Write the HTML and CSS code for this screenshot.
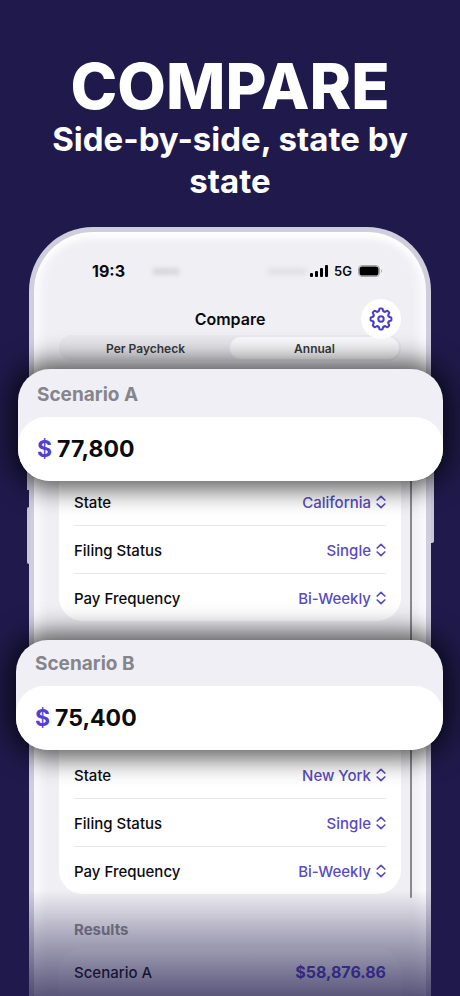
FILE: index.html
```
<!DOCTYPE html>
<html lang="en">
<head>
<meta charset="utf-8">
<meta name="viewport" content="width=device-width, initial-scale=1">
<title>Compare</title>
<link rel="stylesheet" href="styles.css">
</head>
<body>
<svg class="sprite" aria-hidden="true">
  <symbol id="updown" viewBox="0 0 10 14"><path d="M1.2 5 5 1.4l3.8 3.6M1.2 9 5 12.6l3.8-3.6"/></symbol>
</svg>
<header class="hero">
  <h1>COMPARE</h1>
  <p>Side-by-side, state by state</p>
</header>
<main class="phone">
  <span class="key key-upper"></span>
  <span class="key key-lower"></span>
  <span class="key key-power"></span>
  <span class="scrollbar"></span>

  <div class="status">
    <span class="time">19:3</span>
    <span class="ghost"></span>
    <span class="ghost ghost-wide"></span>
    <div class="signals">
      <svg class="bars" viewBox="0 0 18 12" aria-hidden="true"><rect x="0" y="8" width="3" height="4" rx="1"/><rect x="5" y="6" width="3" height="6" rx="1"/><rect x="10" y="3" width="3" height="9" rx="1"/><rect x="15" y="0" width="3" height="12" rx="1"/></svg>
      <span>5G</span>
      <svg class="battery" viewBox="0 0 25 12" aria-hidden="true"><rect class="shell" x=".5" y=".5" width="21" height="11" rx="3.5"/><rect x="1.5" y="1.5" width="19" height="9" rx="2.8"/><path class="tip" d="M23 4q2 2 0 4z"/></svg>
    </div>
  </div>

  <div class="titlebar">
    <h2>Compare</h2>
    <button class="gear" type="button" aria-label="Settings">
      <svg viewBox="-12 -12 24 24" aria-hidden="true">
        <defs><path id="tooth" d="M-3.1-7.5Q-2-7.6-1.9-8.6L-1.8-9.6Q-1.7-10.4-.9-10.4H.9Q1.7-10.4 1.8-9.6L1.9-8.6Q2-7.6 3.1-7.5"/></defs>
        <use href="#tooth"/><use href="#tooth" transform="rotate(45)"/><use href="#tooth" transform="rotate(90)"/><use href="#tooth" transform="rotate(135)"/><use href="#tooth" transform="rotate(180)"/><use href="#tooth" transform="rotate(225)"/><use href="#tooth" transform="rotate(270)"/><use href="#tooth" transform="rotate(315)"/>
        <circle r="2.7"/>
      </svg>
    </button>
  </div>

  <div class="segments">
    <button type="button">Per Paycheck</button>
    <button type="button" class="active">Annual</button>
  </div>

  <section class="card">
    <label for="amount-a">Scenario A</label>
    <div class="amount"><span>$</span><input id="amount-a" type="text" value="77,800"></div>
  </section>
  <div class="list">
    <div class="row"><label for="state-a">State</label><select id="state-a"><option>California</option></select><svg><use href="#updown"/></svg></div>
    <div class="row"><label for="filing-a">Filing Status</label><select id="filing-a"><option>Single</option></select><svg><use href="#updown"/></svg></div>
    <div class="row"><label for="pay-a">Pay Frequency</label><select id="pay-a"><option>Bi-Weekly</option></select><svg><use href="#updown"/></svg></div>
  </div>

  <section class="card card-b">
    <label for="amount-b">Scenario B</label>
    <div class="amount"><span>$</span><input id="amount-b" type="text" value="75,400"></div>
  </section>
  <div class="list list-b">
    <div class="row"><label for="state-b">State</label><select id="state-b"><option>New York</option></select><svg><use href="#updown"/></svg></div>
    <div class="row"><label for="filing-b">Filing Status</label><select id="filing-b"><option>Single</option></select><svg><use href="#updown"/></svg></div>
    <div class="row"><label for="pay-b">Pay Frequency</label><select id="pay-b"><option>Bi-Weekly</option></select><svg><use href="#updown"/></svg></div>
  </div>

  <section class="results">
    <h3>Results</h3>
    <div class="result"><span>Scenario A</span><strong>$58,876.86</strong></div>
  </section>
</main>
</body>
</html>
```
FILE: styles.css
```
* { box-sizing: border-box; }

body {
  margin: 0;
  min-height: 100vh;
  overflow-x: hidden;
  background: #1f1a4b;
  color: #0b0b0d;
  font-family: Inter, "Liberation Sans", sans-serif;
}

h1, h2, h3, p { margin: 0; }

button, input, select {
  margin: 0;
  padding: 0;
  border: 0;
  background: none;
  color: inherit;
  font: inherit;
}

.sprite { position: absolute; width: 0; height: 0; }

.hero {
  padding: 54px 40px 0;
  color: #fff;
  text-align: center;
}

.hero h1 {
  font-size: 63px;
  font-weight: 800;
  line-height: 64px;
}

.hero p {
  font-size: 33px;
  font-weight: 700;
  line-height: 42px;
}

.phone {
  position: relative;
  margin: 25px 29px 0;
  padding: 19px 25px 0;
  border: 5px solid #d0cedd;
  border-bottom: 0;
  border-radius: 64px 64px 0 0;
  background: #f0eff4;
  box-shadow:
    inset 0 12px 8px -6px #fff,
    inset 13px 0 8px -6px #fafafd,
    inset -13px 0 8px -6px #fafafd;
}

.key {
  position: absolute;
  width: 3px;
  background: #c9c7d6;
}

.key-upper { top: 195px; left: -7px; height: 63px; }
.key-lower { top: 275px; left: -7px; height: 57px; border-radius: 2px 0 0 2px; }
.key-power { top: 215px; right: -8px; height: 96px; border-radius: 0 2px 2px 0; }

.scrollbar {
  position: absolute;
  top: 195px;
  right: 14px;
  bottom: 98px;
  width: 2px;
  border-radius: 1px;
  background: #8a898d;
}

.status {
  display: flex;
  align-items: center;
  height: 40px;
  padding: 0 18px 0 33px;
  font-size: 16px;
  font-weight: 700;
}

.ghost {
  width: 26px;
  height: 7px;
  margin-left: 28px;
  background: #d8d7dc;
  filter: blur(2px);
}

.ghost-wide { width: 38px; margin-left: auto; background: #e2e1e7; }

.signals {
  display: flex;
  align-items: center;
  gap: 6px;
  margin-left: 4px;
  font-size: 13px;
  font-weight: 600;
}

.bars { width: 18px; height: 12px; }
.battery { width: 25px; height: 12px; }
.battery .shell { fill: none; stroke: #a5a4a9; }
.battery .tip { fill: #a5a4a9; }

.titlebar {
  display: grid;
  grid-template-columns: 40px 1fr 40px;
  align-items: center;
  height: 56px;
}

.titlebar h2 {
  grid-column: 2;
  font-size: 16px;
  font-weight: 600;
  text-align: center;
}

.gear {
  position: relative;
  display: grid;
  place-items: center;
  width: 40px;
  height: 40px;
  border-radius: 50%;
  background: #fff;
}

.gear svg {
  width: 24px;
  height: 24px;
  fill: none;
  stroke: #4a3ec8;
  stroke-width: 2;
  stroke-linecap: round;
}

.segments {
  display: grid;
  grid-template-columns: 1fr 1fr;
  height: 26px;
  margin-top: -12px;
  padding: 2px;
  border-radius: 13px;
  background: #e9e8ed;
  color: #3a3a3e;
  font-size: 12px;
  font-weight: 600;
}

.segments .active { border-radius: 11px; background: #fafafc; }

.card {
  position: relative;
  margin: 8px -42px 0 -41px;
  border-radius: 32px;
  background: #f0eff5;
  box-shadow: 0 0 26px 8px rgba(0, 0, 0, .66);
}

.card label {
  display: block;
  padding: 4px 19px 0;
  color: #86858b;
  font-size: 19px;
  font-weight: 700;
  line-height: 44px;
}

.amount {
  display: flex;
  align-items: center;
  gap: 5px;
  height: 64px;
  padding: 0 19px;
  border-radius: 28px 28px 32px 32px;
  background: #fff;
  font-size: 23px;
  font-weight: 700;
}

.amount span { color: #4f42d0; }
.amount input { flex: 1; min-width: 0; }

.list {
  padding: 0 15px;
  border-radius: 0 0 24px 24px;
  background: #fff;
}

.row {
  display: flex;
  align-items: center;
  gap: 5px;
  height: 48px;
  padding-top: 1px;
  font-size: 15px;
  font-weight: 500;
}

.list .row:first-child { height: 44px; padding: 0 0 2px; }
.row + .row { border-top: 1px solid #e9e9ec; }

.row select {
  flex: 1;
  min-width: 0;
  appearance: none;
  color: #594bc0;
  text-align-last: right;
}

.row svg {
  width: 10px;
  height: 14px;
  fill: none;
  stroke: #594bc0;
  stroke-width: 1.7;
  stroke-linecap: round;
  stroke-linejoin: round;
}

.card-b { margin: 19px -42px 0 -43px; }
.card-b label { padding-top: 2px; line-height: 44px; }
.list-b { padding-top: 4px; }

.results {
  position: relative;
  margin: 0 -25px;
  padding: 24px 40px 0;
}

.results::after {
  content: "";
  position: absolute;
  inset: -4px -5px 0;
  background: linear-gradient(rgba(31, 26, 75, 0), rgba(31, 26, 75, .32) 42%, rgba(31, 26, 75, .72));
}

.results h3 {
  color: #86858b;
  font-size: 15px;
  font-weight: 700;
  line-height: 24px;
}

.result {
  display: flex;
  align-items: center;
  justify-content: space-between;
  height: 48px;
  margin: 6px -15px 0;
  padding: 0 15px;
  border-radius: 24px 24px 0 0;
  background: #f5f4f9;
  font-size: 15px;
  font-weight: 500;
}

.result strong { color: #4a3ec8; font-size: 16px; font-weight: 700; }
```
